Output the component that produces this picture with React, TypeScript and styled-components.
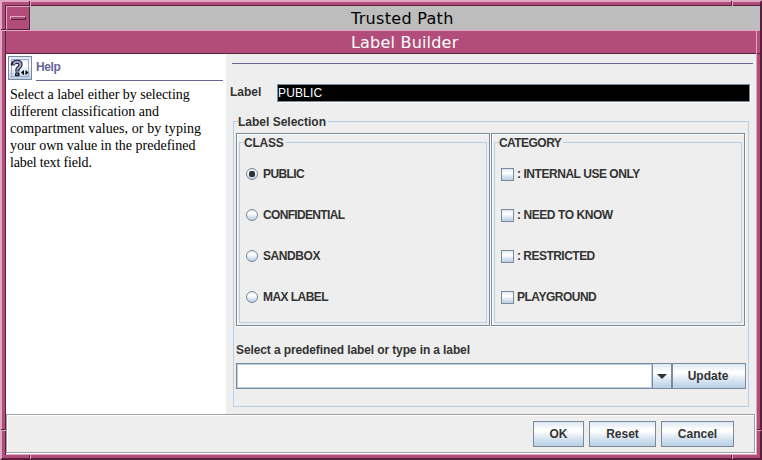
import React from 'react';
import styled, { createGlobalStyle, css } from 'styled-components';

const Global = createGlobalStyle`
  *{box-sizing:border-box}
  html,body{margin:0;padding:0;overflow:hidden}
  body{font-family:"Liberation Sans",Arial,sans-serif;font-size:12px;color:#333}
`;

const metalFill = css`
  background: linear-gradient(#dde8f3 0%, #ffffff 32%, #ffffff 38%, #dce7f2 65%, #b8cfe5 100%);
`;

const Window = styled.div`
  position: relative;
  width: 762px;
  height: 460px;
  display: flex;
  flex-direction: column;
  background: #b24d7a;
  border: solid;
  border-width: 2px;
  border-color: #dfa9c3 #58203c #58203c #dfa9c3;
  padding: 3px 0 0 3px;
`;
const Inner = styled.div`
  width: 755px;
  height: 450px;
  border-left: 1px solid #58203c;
  border-top: 1px solid #58203c;
  display: flex;
  flex-direction: column;
`;
const TitleBar = styled.div`
  height: 25px;
  display: flex;
  flex: none;
  background: #bdbdbd;
  border-bottom: 1px solid #dfa9c3;
`;
const MenuButton = styled.button`
  width: 24px;
  height: 24px;
  flex: none;
  padding: 0;
  display: flex;
  align-items: center;
  justify-content: center;
  background: #b24d7a;
  border: 1px solid;
  border-color: #dfa9c3 #58203c #58203c #dfa9c3;
`;
const MenuMark = styled.span`
  width: 16px;
  height: 4px;
  border: 1px solid;
  border-color: #dfa9c3 #58203c #58203c #dfa9c3;
`;
const Title = styled.div`
  font-family: "DejaVu Sans", sans-serif;
  font-size: 16px;
  white-space: nowrap;
`;
const PathTitle = styled(Title)`
  flex: 1;
  padding-left: 321px;
  line-height: 25px;
  letter-spacing: 0.3px;
  color: #000;
`;
const BuilderTitle = styled(Title)`
  flex: none;
  height: 23px;
  width: 754px;
  line-height: 23px;
  padding-left: 345px;
  letter-spacing: 0.2px;
  color: #fff;
  border-bottom: 1px solid #58203c;
`;
const Content = styled.main`
  width: 751px;
  height: 401px;
  background: #eee;
  border-right: 1px solid #dfa9c3;
  border-bottom: 1px solid #dfa9c3;
`;
const Body = styled.div`
  height: 360px;
  display: flex;
`;
const HelpPane = styled.aside`
  width: 220px;
  background: #fff;
  padding: 2px 0 0 2px;
`;
const HelpHead = styled.div`
  display: flex;
  gap: 4px;
  height: 25px;
`;
const HelpButton = styled.button`
  width: 24px;
  height: 24px;
  padding: 0;
  border: 1px solid #7a8a99;
  ${metalFill}
  svg { display: block; }
`;
const HelpTitle = styled.div`
  width: 187px;
  border-bottom: 1px solid #666699;
  color: #666699;
  font-weight: bold;
  line-height: 23px;
  letter-spacing: -0.4px;
`;
const HelpText = styled.p`
  margin: 5px 0 0 2px;
  font: 14px/17px "Liberation Serif", "Times New Roman", serif;
  color: #000;
  white-space: nowrap;
`;
const HelpLine = styled.span<{ $ls: number }>`
  display: block;
  letter-spacing: ${p => p.$ls}px;
`;
const Form = styled.section`
  flex: 1;
  padding: 9px 3px 0 5px;
`;
const Rule = styled.div`
  height: 1px;
  margin-left: 1px;
  background: #666699;
`;
const FieldRow = styled.div`
  display: flex;
  margin-top: 20px;
  height: 19px;
`;
const Text = styled.span<{ $ls?: number }>`
  font-weight: bold;
  white-space: nowrap;
  line-height: 14px;
  letter-spacing: ${p => p.$ls ?? 0}px;
`;
const FieldLabel = styled(Text)`
  width: 46px;
  padding-top: 1px;
  text-indent: -1px;
`;
const Field = styled.div`
  width: 473px;
  height: 18px;
  background: #000;
  border: 1px solid #7a8a99;
  box-shadow: 1px 1px 0 #fff;
  color: #fff;
  line-height: 16px;
  letter-spacing: 0.15px;
`;
const Group = styled.div`
  position: relative;
  border: 1px solid #b8cfe5;
`;
const Legend = styled(Text)`
  position: absolute;
  top: -7px;
  left: 4px;
  padding: 0 2px 0 0;
  background: #eee;
`;
const Selection = styled(Group)`
  width: 516px;
  height: 286px;
  margin: 18px 0 0 2px;
  padding: 11px 2px 0;
`;
const Panels = styled.div`
  display: flex;
  gap: 1px;
`;
const Panel = styled.div`
  width: 254px;
  height: 193px;
  padding: 8px 2px 2px;
  border: 1px solid #7a8a99;
  box-shadow: 1px 1px 0 #fff, inset 1px 1px 0 #fff;
`;
const Options = styled(Group)`
  height: 181px;
  padding: 24px 0 0 6px;
  display: flex;
  flex-direction: column;
`;
const Option = styled.div<{ $gap: number }>`
  height: 41px;
  flex: none;
  display: flex;
  align-items: flex-start;
  gap: ${p => p.$gap}px;
  &:last-child { height: 20px; }
`;
const Box = styled.span`
  width: 13px;
  height: 13px;
  margin-top: 1px;
  border: 1px solid #7a8a99;
  ${metalFill}
`;
const Radio = styled.span<{ $on: boolean }>`
  width: 12px;
  height: 12px;
  margin-top: 1px;
  display: flex;
  align-items: center;
  justify-content: center;
  border: 1px solid #7a8a99;
  border-radius: 50%;
  ${metalFill}
  &::after {
    content: '';
    width: 6px;
    height: 6px;
    border-radius: 2px;
    background: ${p => (p.$on ? '#333' : 'transparent')};
  }
`;
const Prompt = styled(Text)`
  display: block;
  margin-top: 17px;
`;
const ComboRow = styled.div`
  display: flex;
  margin-top: 6px;
`;
const ComboField = styled.div`
  width: 416px;
  height: 26px;
  background: #fff;
  border: 1px solid #7a8a99;
  border-right: 0;
  box-shadow: inset 0 0 0 1px #b8cfe5;
`;
const Button = styled.button<{ $w: number; $ls?: number }>`
  width: ${p => p.$w}px;
  height: 26px;
  padding: 0;
  display: flex;
  align-items: center;
  justify-content: center;
  border: 1px solid #7a8a99;
  color: #333;
  font: bold 12px/14px "Liberation Sans", Arial, sans-serif;
  letter-spacing: ${p => p.$ls ?? 0}px;
  ${metalFill}
`;
const UpdateButton = styled(Button)`
  padding-right: 2px;
`;
const Footer = styled.footer`
  width: 749px;
  height: 39px;
  border: 1px solid #a0a0a0;
  box-shadow: inset 1px 1px 0 #fff, 1px 1px 0 #fff;
  display: flex;
  justify-content: flex-end;
  gap: 5px;
  padding: 6px 20px 0 0;
`;
const Notches = styled.svg`
  position: absolute;
  left: -2px;
  top: -2px;
  pointer-events: none;
`;

const classes: [string, number][] = [['PUBLIC', -0.6], ['CONFIDENTIAL', -0.67], ['SANDBOX', -0.43], ['MAX LABEL', -0.55]];
const categories: [string, number][] = [[': INTERNAL USE ONLY', -0.45], [': NEED TO KNOW', -0.43], [': RESTRICTED', -0.52], ['PLAYGROUND', -0.5]];
const help: [string, number][] = [
  ['Select a label either by selecting', -0.03],
  ['different classification and', 0],
  ['compartment values, or by typing', 0.08],
  ['your own value in the predefined', 0],
  ['label text field.', -0.15],
];

const HelpIcon = () => (
  <svg width="22" height="22" viewBox="0 0 22 22">
    <rect x="2.5" y="2.5" width="17" height="17" fill="none" stroke="#a3a3d1" />
    <g fill="none" strokeLinejoin="round">
      <path d="M3.8 8.5V7.2Q4.8 4.8 8 4.8Q11.6 4.8 11.6 7.6Q11.6 9.4 9.8 10.5Q8.2 11.6 8.2 14.5" stroke="#222233" strokeWidth="4.2" />
      <path d="M4.8 7.5V7.2Q5.4 4.8 8 4.8Q11.6 4.8 11.6 7.6Q11.6 9.4 9.8 10.5Q8.2 11.6 8.2 13.5" stroke="#a3a3d1" strokeWidth="2" />
    </g>
    <path d="M7 15.3h2.5l1 1v1.9l-1 1H7l-1-1v-1.9z" fill="#222233" />
    <path d="M7.3 16.4h1.4v1.3H7.3z" fill="#a3a3d1" />
    <path d="M15 13v5.2l-3-2.6zM16.5 13v5.2l3-2.6z" fill="#000" />
  </svg>
);

export default function App() {
  return (
    <>
      <Global />
      <Window>
        <Inner>
          <TitleBar>
            <MenuButton aria-label="Window menu"><MenuMark /></MenuButton>
            <PathTitle>Trusted Path</PathTitle>
          </TitleBar>
          <BuilderTitle>Label Builder</BuilderTitle>
          <Content>
            <Body>
              <HelpPane>
                <HelpHead>
                  <HelpButton aria-label="Help"><HelpIcon /></HelpButton>
                  <HelpTitle>Help</HelpTitle>
                </HelpHead>
                <HelpText>
                  {help.map(([t, ls]) => <HelpLine key={t} $ls={ls}>{t}</HelpLine>)}
                </HelpText>
              </HelpPane>
              <Form>
                <Rule />
                <FieldRow>
                  <FieldLabel>Label</FieldLabel>
                  <Field>PUBLIC</Field>
                </FieldRow>
                <Selection>
                  <Legend>Label Selection</Legend>
                  <Panels>
                    <Panel>
                      <Options>
                        <Legend $ls={-0.2}>CLASS</Legend>
                        {classes.map(([t, ls], i) => (
                          <Option key={t} $gap={5}><Radio $on={i === 0} /><Text $ls={ls}>{t}</Text></Option>
                        ))}
                      </Options>
                    </Panel>
                    <Panel>
                      <Options>
                        <Legend $ls={-0.55}>CATEGORY</Legend>
                        {categories.map(([t, ls]) => (
                          <Option key={t} $gap={3}><Box /><Text $ls={ls}>{t}</Text></Option>
                        ))}
                      </Options>
                    </Panel>
                  </Panels>
                  <Prompt $ls={-0.11}>Select a predefined label or type in a label</Prompt>
                  <ComboRow>
                    <ComboField />
                    <Button $w={20} aria-label="Show labels">
                      <svg width="10" height="5" viewBox="0 0 10 5"><path d="M0 0H10L5 5Z" fill="#333" /></svg>
                    </Button>
                    <UpdateButton $w={74}>Update</UpdateButton>
                  </ComboRow>
                </Selection>
              </Form>
            </Body>
            <Footer>
              <Button $w={51}>OK</Button>
              <Button $w={67}>Reset</Button>
              <Button $w={73}>Cancel</Button>
            </Footer>
          </Content>
        </Inner>
        <Notches width="762" height="460" shapeRendering="crispEdges">
          <path d="M29.5 1V6M731.5 1V6M1 29.5H6M1 429.5H6M29.5 455V459M731.5 455V459M757 429.5H761" stroke="#58203c" />
          <path d="M30.5 1V6M732.5 1V6M1 30.5H6M1 430.5H6M30.5 455V459M732.5 455V459M757 430.5H761M756.5 31V54" stroke="#dfa9c3" />
        </Notches>
      </Window>
    </>
  );
}
